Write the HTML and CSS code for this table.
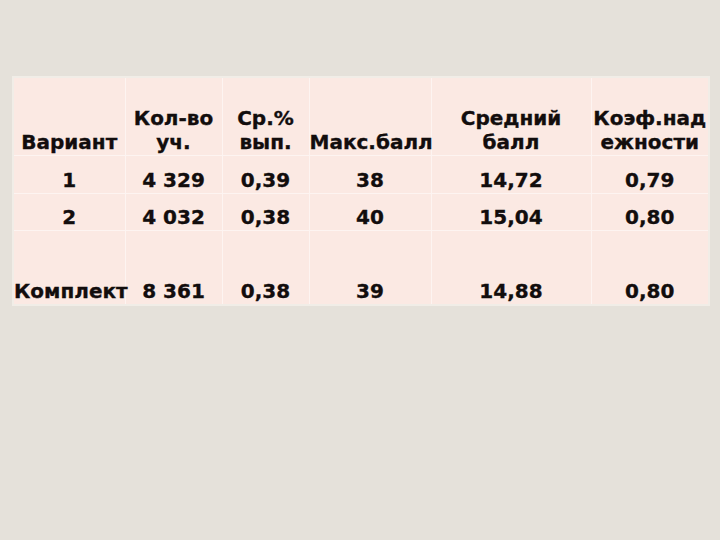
FILE: index.html
```html
<!DOCTYPE html>
<html lang="ru">
<head>
<meta charset="utf-8">
<title>Результаты</title>
<link rel="stylesheet" href="styles.css">
</head>
<body>
<div class="slide">
  <table class="results">
    <colgroup>
      <col class="c1"><col class="c2"><col class="c3"><col class="c4"><col class="c5"><col class="c6">
    </colgroup>
    <tr class="head">
      <td>Вариант</td>
      <td>Кол-во<br>уч.</td>
      <td>Ср.%<br>вып.</td>
      <td>Макс.балл</td>
      <td>Средний<br>балл</td>
      <td>Коэф.над<br>ежности</td>
    </tr>
    <tr class="r1">
      <td>1</td><td>4 329</td><td>0,39</td><td>38</td><td>14,72</td><td>0,79</td>
    </tr>
    <tr class="r2">
      <td>2</td><td>4 032</td><td>0,38</td><td>40</td><td>15,04</td><td>0,80</td>
    </tr>
    <tr class="r3">
      <td>Комплект</td><td>8 361</td><td>0,38</td><td>39</td><td>14,88</td><td>0,80</td>
    </tr>
  </table>
</div>
</body>
</html>
```

FILE: styles.css
```css
html, body {
  margin: 0;
  padding: 0;
  background: #e5e1da;
}
.slide {
  width: 720px;
  height: 540px;
  padding: 76px 0 0 12px;
  box-sizing: border-box;
}
.results {
  border-collapse: collapse;
  table-layout: fixed;
  width: 698px;
  background: #fbe9e3;
  border: 2px solid #f1ede7;
  font-family: "DejaVu Sans", Verdana, sans-serif;
  font-weight: bold;
  font-size: 20px;
  line-height: 24px;
  color: #120d0d;
  -webkit-text-stroke: 0.35px #120d0d;
}
.results td {
  border: 1px solid #fdf4f1;
  text-align: center;
  vertical-align: bottom;
  padding: 0 0 1px 0;
  white-space: nowrap;
}
.c1 { width: 112px; }
.c2 { width: 97px; }
.c3 { width: 87px; }
.c4 { width: 122px; }
.c5 { width: 160px; }
.c6 { width: 118px; }
.head { height: 78px; }
.r1 { height: 38px; }
.r2 { height: 37px; }
.r3 { height: 75px; }
```
